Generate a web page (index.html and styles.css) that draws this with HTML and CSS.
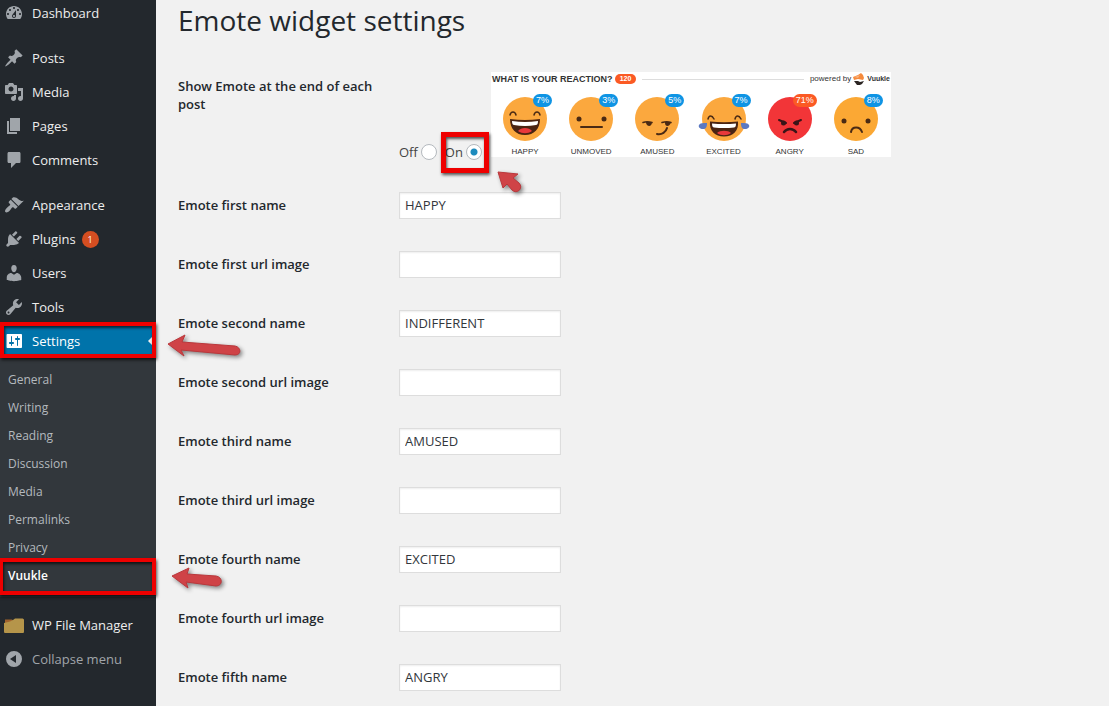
FILE: index.html
```html
<!DOCTYPE html>
<html lang="en">
<head>
<meta charset="utf-8">
<title>Emote widget settings</title>
<link rel="stylesheet" href="styles.css">
</head>
<body>
<div class="layout">
  <nav class="sidebar" aria-label="Main menu">
    <ul class="menu">
      <li><a class="item" href="#"><svg class="icon" viewBox="0 0 20 20"><path fill-rule="evenodd" d="M3.76 16h12.48c1.1-1.37 1.76-3.11 1.76-5 0-4.42-3.58-8-8-8s-8 3.58-8 8c0 1.89.66 3.63 1.76 5zM10 4c.55 0 1 .45 1 1s-.45 1-1 1-1-.45-1-1 .45-1 1-1zM6 6c.55 0 1 .45 1 1s-.45 1-1 1-1-.45-1-1 .45-1 1-1zm8 0c.55 0 1 .45 1 1s-.45 1-1 1-1-.45-1-1 .45-1 1-1zm-5.37 5.55L12 7v6c0 1.1-.9 2-2 2s-2-.9-2-2c0-.57.24-1.08.63-1.45zM4 10c.55 0 1 .45 1 1s-.45 1-1 1-1-.45-1-1 .45-1 1-1zm12 0c.55 0 1 .45 1 1s-.45 1-1 1-1-.45-1-1 .45-1 1-1zm-5 3c0-.55-.45-1-1-1s-1 .45-1 1 .45 1 1 1 1-.45 1-1z"/></svg>Dashboard</a></li>
      <li class="group"><a class="item" href="#"><svg class="icon" viewBox="0 0 20 20"><path d="M10.44 3.02l1.82-1.82 6.36 6.35-1.83 1.82c-1.05-.68-2.48-.57-3.41.36l-.75.75c-.92.93-1.04 2.35-.35 3.41l-1.83 1.82-2.41-2.41-2.8 2.79c-.42.42-3.38 2.71-3.8 2.29s1.86-3.39 2.28-3.81l2.79-2.79L4.1 9.36l1.83-1.82c1.05.69 2.48.57 3.4-.36l.75-.75c.93-.92 1.05-2.35.36-3.41z"/></svg>Posts</a></li>
      <li><a class="item" href="#"><svg class="icon" viewBox="0 0 20 20"><path fill-rule="evenodd" d="M13 11V4c0-.55-.45-1-1-1h-1.67L9 1H5L3.67 3H2c-.55 0-1 .45-1 1v7c0 .55.45 1 1 1h10c.55 0 1-.45 1-1zM7 4.5c1.38 0 2.5 1.12 2.5 2.5S8.38 9.5 7 9.5 4.5 8.38 4.5 7 5.62 4.5 7 4.5zM14 6h5v10.5c0 1.38-1.12 2.5-2.5 2.5S14 17.88 14 16.5s1.12-2.5 2.5-2.5c.17 0 .34.02.5.05V9h-3V6zm-4 8.05V13h2v3.5c0 1.38-1.12 2.5-2.5 2.5S7 17.88 7 16.5 8.12 14 9.5 14c.17 0 .34.02.5.05z"/></svg>Media</a></li>
      <li><a class="item" href="#"><svg class="icon" viewBox="0 0 20 20"><path d="M6 15V2h10v13H6zm-1 1h8v2H3V5h2v11z"/></svg>Pages</a></li>
      <li><a class="item" href="#"><svg class="icon" viewBox="0 0 20 20"><path d="M5 2h10c1.1 0 1.500.6 1.500 1.500v8c0 1-.6 1.500-1.500 1.500h-3l-5 5v-5H5c-1.100 0-1.500-.6-1.500-1.500v-8C3.500 2.600 4 2 5 2z"/></svg>Comments</a></li>
      <li class="group"><a class="item" href="#"><svg class="icon" viewBox="0 0 20 20"><path d="M14.480 11.060L7.410 3.990l1.500-1.500c.5-.56 2.300-.47 3.510.32 1.210.8 1.430 1.280 2.910 2.100 1.180.64 2.450 1.260 4.450.85zm-.71.71L6.700 4.700 4.930 6.470c-.39.39-.39 1.020 0 1.410l1.060 1.060c.39.39.39 1.030 0 1.420-.6.6-1.430 1.110-2.210 1.690-.35.26-.7.53-1.010.84C1.430 14.230.4 16.080 1.400 17.070c.99 1 2.840-.03 4.180-1.360.31-.31.58-.66.85-1.020.57-.78 1.080-1.610 1.690-2.210.39-.39 1.020-.39 1.410 0l1.060 1.060c.39.39 1.020.39 1.410 0z"/></svg>Appearance</a></li>
      <li><a class="item" href="#"><svg class="icon" viewBox="0 0 20 20"><path d="M13.110 4.360L9.870 7.600 8 5.730l3.240-3.240c.35-.34 1.050-.2 1.560.32.52.51.66 1.210.31 1.550zm-8 1.770l.91-1.120 9.010 9.010-1.190.84c-.71.71-2.630 1.160-3.820 1.160H6.140L4.900 17.260c-.59.59-1.540.59-2.120 0-.59-.58-.59-1.530 0-2.120l1.240-1.240v-3.880c0-1.130.4-3.190 1.090-3.890zm7.260 3.970l3.240-3.240c.34-.35 1.040-.21 1.550.31.52.51.66 1.210.31 1.550l-3.240 3.250z"/></svg>Plugins<span class="count">1</span></a></li>
      <li><a class="item" href="#"><svg class="icon" viewBox="0 0 20 20"><path d="M10 9.250c-2.270 0-2.730-3.440-2.730-3.440C7 4.020 7.820 2 9.970 2c2.160 0 2.980 2.020 2.710 3.810 0 0-.41 3.440-2.680 3.440zm0 2.570L12.720 10c2.390 0 4.520 2.330 4.520 4.530v2.490s-3.650 1.130-7.240 1.130c-3.650 0-7.240-1.130-7.240-1.130v-2.490c0-2.250 1.940-4.480 4.470-4.480z"/></svg>Users</a></li>
      <li><a class="item" href="#"><svg class="icon" viewBox="0 0 20 20"><path fill-rule="evenodd" d="M16.680 9.770c-1.340 1.340-3.300 1.670-4.950.99l-5.410 6.520c-.99.99-2.590.99-3.580 0s-.99-2.590 0-3.570l6.520-5.420c-.68-1.650-.35-3.610.99-4.950 1.280-1.280 3.120-1.620 4.720-1.060l-2.890 2.890 2.820 2.820 2.860-2.870c.53 1.580.18 3.390-1.080 4.650zM3.810 16.210c.4.39 1.040.39 1.430 0 .4-.4.4-1.040 0-1.430-.39-.4-1.030-.4-1.430 0-.39.39-.39 1.030 0 1.430z"/></svg>Tools</a></li>
      <li class="marked">
        <a class="item current" href="#"><svg class="icon" viewBox="0 0 20 20"><path fill-rule="evenodd" d="M18 16V4c0-.55-.45-1-1-1H3.500c-.55 0-1 .45-1 1v12c0 .55.45 1 1 1H17c.55 0 1-.45 1-1zM8 11h1c.55 0 1 .45 1 1s-.45 1-1 1H8v1.500c0 .28-.22.5-.5.5s-.5-.22-.5-.5V13H6c-.55 0-1-.45-1-1s.45-1 1-1h1V5.500c0-.28.22-.5.5-.5s.5.22.5.5V11zm5-2h-1c-.55 0-1-.45-1-1s.45-1 1-1h1V5.500c0-.28.22-.5.5-.5s.5.22.5.5V7h1c.55 0 1 .45 1 1s-.45 1-1 1h-1v5.500c0 .28-.22.5-.5.5s-.5-.22-.5-.5V9z"/></svg>Settings</a>
        <span class="frame frame-settings"></span>
        <svg class="arrow arrow-settings" viewBox="0 0 76 26"><path d="M1 10L18 1l-3 7 53 4c6 1 7 9 0 9l-54-5 3 6z"/></svg>
      </li>
    </ul>
    <ul class="submenu">
      <li><a href="#">General</a></li>
      <li><a href="#">Writing</a></li>
      <li><a href="#">Reading</a></li>
      <li><a href="#">Discussion</a></li>
      <li><a href="#">Media</a></li>
      <li><a href="#">Permalinks</a></li>
      <li><a href="#">Privacy</a></li>
      <li class="marked">
        <a class="active" href="#">Vuukle</a>
        <span class="frame frame-vuukle"></span>
        <svg class="arrow arrow-vuukle" viewBox="0 0 54 26"><path d="M1 9L18 1l-2 6 29 2c7 1 7 10 0 10l-30-4 2 6z"/></svg>
      </li>
    </ul>
    <ul class="tail">
      <li><a class="item" href="#"><svg class="icon" viewBox="0 0 20 20"><path fill="#a0622d" d="M1 4.500h7l2 2-3 2H1z"/><path fill="#b5954a" d="M0 8l6-1.500L9 5l2-1.500h7c1 0 2 .5 2 1.500v11.500c0 1-.5 1.500-1.500 1.500h-17C.5 18 0 17.500 0 16.500z"/></svg>WP File Manager</a></li>
      <li><button class="item collapse" type="button"><svg class="icon" viewBox="0 0 20 20"><path fill-rule="evenodd" d="M10 2a8 8 0 1 0 0 16 8 8 0 0 0 0-16zm2 4v8l-6-4z"/></svg>Collapse menu</button></li>
    </ul>
  </nav>

  <main class="content">
    <h1>Emote widget settings</h1>
    <form class="settings">
      <div class="row">
        <span class="label" id="show-label">Show Emote at the end of each post</span>
        <div class="toggle" role="radiogroup" aria-labelledby="show-label">
          <label class="choice">Off<input type="radio" name="show" value="off"></label>
          <label class="choice marked">On<input type="radio" name="show" value="on" checked>
            <span class="frame frame-on"></span>
            <svg class="arrow arrow-on" viewBox="0 0 30 26"><path d="M2 2l20 2-5 4 6 5c5 5-2 12-7 7l-5-6-4 4z"/></svg>
          </label>
          <section class="widget" aria-label="Reaction preview">
            <header class="widget-head">
              <strong>WHAT IS YOUR REACTION?</strong><span class="total">120</span><span class="rule"></span>
              <span class="powered">powered by</span>
              <svg class="logo" viewBox="0 0 12 12"><path fill="#f58a3c" d="M0 4l5-2 3-2 2 2 1 3-1 2-5-1-4 1z"/><path fill="#f9b07c" d="M1 4l6-2-2 3z"/><path fill="#2b2523" d="M1 8l4 0 2 1 4-1-2 3-2 1H4z"/></svg>
              <b class="brand">Vuukle</b>
            </header>
            <div class="faces">
              <figure><div class="face"><svg viewBox="0 0 44 44"><circle cx="22" cy="22" r="22" fill="#fba83e"/><g fill="none" stroke="#4a2a14" stroke-width="1.500" stroke-linecap="round"><path d="M7 18c1-4 5-4 6 0M31 18c1-4 5-4 6 0"/></g><path fill="#4a2412" d="M7 22q15 2 30 0c0 10-6 16-15 16S7 32 7 22z"/><path fill="#fff" d="M9 24q13 2 26 0c0 3-1 4-2 4q-11 2-22 0c-1 0-2-1-2-4z"/><path fill="#e8383b" d="M15 34c3-4 11-4 14 0-4 3-10 3-14 0z"/></svg><span class="badge">7%</span></div><figcaption>HAPPY</figcaption></figure>
              <figure><div class="face"><svg viewBox="0 0 44 44"><circle cx="22" cy="22" r="22" fill="#fba83e"/><g fill="#4a2a14"><circle cx="10" cy="22" r="2.500"/><circle cx="35" cy="22" r="2.500"/><rect x="11" y="29" width="23" height="2" rx="1"/></g></svg><span class="badge">3%</span></div><figcaption>UNMOVED</figcaption></figure>
              <figure><div class="face"><svg viewBox="0 0 44 44"><circle cx="22" cy="22" r="22" fill="#fba83e"/><path fill="#4a2a14" d="M11 25h6c0 5-5 5-6 1zM30 25h6c-1 5-6 5-6 1z"/><g fill="none" stroke="#4a2a14" stroke-width="1.600" stroke-linecap="round"><path d="M8 25.500q4-1.500 9 0M27 25.500q5-1.500 9 0"/><path stroke-width="2" d="M22 37c5 1 9-2 10-6"/></g></svg><span class="badge">5%</span></div><figcaption>AMUSED</figcaption></figure>
              <figure><div class="face"><svg viewBox="0 0 44 44"><circle cx="22" cy="22" r="22" fill="#fba83e"/><g fill="none" stroke="#4a2a14" stroke-width="1.500" stroke-linecap="round"><path d="M6 22c1-4 4-4 6 0M33 22c1-4 4-4 6 0"/></g><path fill="#4a2412" d="M8 24.500q14 1.500 28 0c1 9-5 15-14 15S7 33.500 8 24.500z"/><path fill="#fff" d="M10 26.500q12 1.200 24 0c0 3-1 4-2 4q-10 1-20 0c-1 0-2-1-2-4z"/><path fill="#e8383b" d="M15 36c3-3 11-3 14 0-4 3-10 3-14 0z"/><path fill="#5b79c2" d="M5 26c0 4-1 6-4 6s-5-2-4-4 4-2 8-2zM39 26c0 4 1 6 4 6s5-2 4-4-4-2-8-2z"/></svg><span class="badge">7%</span></div><figcaption>EXCITED</figcaption></figure>
              <figure><div class="face"><svg viewBox="0 0 44 44"><circle cx="22" cy="22" r="22" fill="#f23538"/><g fill="none" stroke="#3b1418" stroke-width="2" stroke-linecap="round"><path d="M11 23l7 3M33 23l-7 3"/><path stroke-width="2.500" d="M16 35c3-4 9-4 12 0"/></g><g fill="#3b1418"><circle cx="15.500" cy="26" r="2.500"/><circle cx="28.500" cy="26" r="2.500"/></g></svg><span class="badge hot">71%</span></div><figcaption>ANGRY</figcaption></figure>
              <figure><div class="face"><svg viewBox="0 0 44 44"><circle cx="22" cy="22" r="22" fill="#fba834"/><g fill="#4a2a14"><circle cx="10" cy="24" r="2.500"/><circle cx="34" cy="24" r="2.500"/></g><path fill="none" stroke="#4a2a14" stroke-width="2" stroke-linecap="round" d="M17 35c1-6 9-6 11 0"/></svg><span class="badge">8%</span></div><figcaption>SAD</figcaption></figure>
            </div>
          </section>
        </div>
      </div>
      <div class="row"><label class="label" for="n1">Emote first name</label><input class="text" id="n1" type="text" value="HAPPY"></div>
      <div class="row"><label class="label" for="u1">Emote first url image</label><input class="text" id="u1" type="text"></div>
      <div class="row"><label class="label" for="n2">Emote second name</label><input class="text" id="n2" type="text" value="INDIFFERENT"></div>
      <div class="row"><label class="label" for="u2">Emote second url image</label><input class="text" id="u2" type="text"></div>
      <div class="row"><label class="label" for="n3">Emote third name</label><input class="text" id="n3" type="text" value="AMUSED"></div>
      <div class="row"><label class="label" for="u3">Emote third url image</label><input class="text" id="u3" type="text"></div>
      <div class="row"><label class="label" for="n4">Emote fourth name</label><input class="text" id="n4" type="text" value="EXCITED"></div>
      <div class="row"><label class="label" for="u4">Emote fourth url image</label><input class="text" id="u4" type="text"></div>
      <div class="row"><label class="label" for="n5">Emote fifth name</label><input class="text" id="n5" type="text" value="ANGRY"></div>
    </form>
  </main>
</div>
</body>
</html>
```
FILE: styles.css
```css
* { box-sizing: border-box; }
body {
  margin: 0;
  background: #f1f1f1;
  color: #23282d;
  font: 13px/18px "Open Sans", "Noto Sans", sans-serif;
}
ul { list-style: none; margin: 0; padding: 0; }
.layout { display: flex; min-height: 100vh; }

.sidebar { flex: none; width: 156px; background: #23282d; }
.menu { margin-top: -4px; }
.group { padding-top: 11px; }
.item {
  display: flex;
  align-items: center;
  gap: 8px;
  width: 100%;
  height: 34px;
  padding: 0 4px;
  color: #eee;
  text-decoration: none;
  white-space: nowrap;
}
.icon { flex: none; width: 20px; height: 20px; fill: #a0a5aa; }
.count {
  width: 17px;
  margin-left: -2px;
  border-radius: 9px;
  background: #d54e21;
  color: #fff;
  font-size: 9px;
  line-height: 17px;
  text-align: center;
}
.current { background: #0073aa; color: #fff; }
.current .icon { fill: #fff; }
.current::after {
  content: "";
  margin-left: auto;
  border: 8px solid transparent;
  border-right-color: #f1f1f1;
  margin-right: -4px;
}
.submenu { padding: 8px 0 7px; background: #32373c; }
.submenu a {
  display: block;
  padding: 5px 8px;
  color: #b4b9be;
  font-size: 12px;
  text-decoration: none;
}
.submenu .active { color: #fff; font-weight: 600; }
.tail { padding-top: 11px; }
.collapse {
  border: 0;
  background: none;
  color: #a0a5aa;
  font: inherit;
}

.marked { position: relative; }
.frame {
  position: absolute;
  border: 4px solid #ee0000;
  box-shadow: 1px 2px 3px #000a, inset 1px 2px 3px #000a;
  pointer-events: none;
}
.frame-settings { inset: -2px 0 0 0; }
.frame-vuukle { inset: -4px 0 -5px -1px; }
.frame-on { inset: -11px -7px -12px -4px; border-width: 5px; }
.arrow {
  position: absolute;
  fill: #cf4347;
  stroke: #b9373b;
  filter: drop-shadow(2px 2px 2px #0007);
  pointer-events: none;
}
.arrow-settings { left: 167px; top: 10px; width: 76px; height: 26px; }
.arrow-vuukle { left: 171px; top: 5px; width: 54px; height: 26px; }
.arrow-on { left: 51px; top: 27px; width: 30px; height: 26px; }

.content { flex: 1; min-width: 0; padding: 4px 20px 0 22px; }
h1 { margin: 0 0 21px; font-size: 28px; font-weight: 500; line-height: 32px; }
.row { display: flex; padding: 15px 0; }
.label {
  flex: none;
  width: 221px;
  padding: 5px 21px 0 0;
  font-weight: 600;
}
.text {
  width: 162px;
  height: 27px;
  margin: 1px 0;
  padding: 2px 5px 4px;
  border: 1px solid #ddd;
  background: #fff;
  box-shadow: inset 0 1px 2px #00000012;
  color: #32373c;
  font: inherit;
}
.toggle { display: flex; align-items: flex-end; gap: 8px; padding-bottom: 4px; }
.choice { display: flex; align-items: center; gap: 3px; height: 18px; margin-bottom: -4px; color: #444; }
.choice input {
  appearance: none;
  width: 16px;
  height: 16px;
  margin: 0;
  border: 1px solid #b4b9be;
  border-radius: 50%;
  background: #fff;
}
.choice input:checked { background: radial-gradient(circle, #1e8cbe 3px, #fff 4px); }

.widget {
  width: 400px;
  height: 85px;
  margin-left: 1px;
  background: #fff;
  color: #333;
  font-family: "Liberation Sans", Arial, sans-serif;
}
.widget-head { display: flex; align-items: center; height: 14px; padding: 0 1px; font-size: 9px; line-height: 14px; white-space: nowrap; }
.total { margin-left: 2px; padding: 0 5px; border-radius: 5px; background: #fb5a24; color: #fff; font-size: 7px; font-weight: bold; line-height: 10px; }
.rule { flex: 1; height: 1px; margin: 0 6px; background: #ddd; }
.powered { font-size: 8px; }
.logo { width: 12px; height: 12px; margin: 0 2px; }
.brand { font-family: "Liberation Sans Narrow", "Liberation Sans", sans-serif; font-size: 7px; }
.faces { display: grid; grid-template-columns: repeat(6, 1fr); padding: 11px 2px 0 1px; }
figure { display: flex; flex-direction: column; align-items: center; gap: 6px; margin: 0; }
.face { position: relative; width: 44px; height: 44px; }
.face svg { display: block; width: 44px; height: 44px; overflow: visible; }
.badge {
  position: absolute;
  top: -3px;
  right: -5px;
  padding: 0 3px;
  border-radius: 7px;
  background: #0f94e4;
  color: #fff;
  font-size: 9px;
  line-height: 13px;
}
.hot { background: #fb5a24; }
figcaption { font-size: 8px; line-height: 10px; }
```
